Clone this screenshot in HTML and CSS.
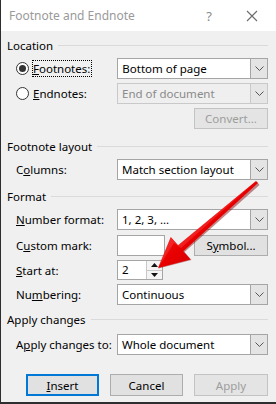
FILE: index.html
```html
<!DOCTYPE html>
<html>
<head>
<meta charset="utf-8">
<link rel="stylesheet" href="styles.css">
</head>
<body>
<div class="win">
  <div class="titlebar">
    <span class="title">Footnote and Endnote</span>
    <span class="help">?</span>
    <svg class="close" width="12" height="12" viewBox="0 0 12 12"><path d="M1 1 L11 11 M11 1 L1 11" stroke="#6b6b6b" stroke-width="1.1" fill="none"/></svg>
  </div>

  <div class="group g-location"><span>Location</span><i class="rule"></i></div>
  <div class="row r-first">
    <span class="radio checked"></span>
    <span class="rlabel focus"><u>F</u>ootnotes:</span>
    <div class="select"><span class="val">Bottom of page</span><span class="drop"><svg width="9" height="5" viewBox="0 0 9 5"><path d="M0.5 0.5 L4.5 4.5 L8.5 0.5" stroke="#555" fill="none"/></svg></span></div>
  </div>
  <div class="row r-gap4">
    <span class="radio"></span>
    <span class="rlabel"><u>E</u>ndnotes:</span>
    <div class="select disabled"><span class="val">End of document</span><span class="drop"><svg width="9" height="5" viewBox="0 0 9 5"><path d="M0.5 0.5 L4.5 4.5 L8.5 0.5" stroke="#555" fill="none"/></svg></span></div>
  </div>
  <div class="row r-gap4 r-right">
    <span class="btn disabled">Convert...</span>
  </div>

  <div class="group g-layout"><span>Footnote layout</span><i class="rule"></i></div>
  <div class="row r-gap5">
    <span class="label">C<u>o</u>lumns:</span>
    <div class="select"><span class="val">Match section layout</span><span class="drop"><svg width="9" height="5" viewBox="0 0 9 5"><path d="M0.5 0.5 L4.5 4.5 L8.5 0.5" stroke="#555" fill="none"/></svg></span></div>
  </div>

  <div class="group g-format"><span>Format</span><i class="rule"></i></div>
  <div class="row r-gap5">
    <span class="label"><u>N</u>umber format:</span>
    <div class="select"><span class="val">1, 2, 3, ...</span><span class="drop"><svg width="9" height="5" viewBox="0 0 9 5"><path d="M0.5 0.5 L4.5 4.5 L8.5 0.5" stroke="#555" fill="none"/></svg></span></div>
  </div>
  <div class="row r-gap5">
    <span class="label">C<u>u</u>stom mark:</span>
    <span class="textbox"></span>
    <span class="btn symbol">S<u>y</u>mbol...</span>
  </div>
  <div class="row r-gap4 r-spin">
    <span class="label"><u>S</u>tart at:</span>
    <div class="spin">
      <span class="val">2</span>
      <span class="spinbtns">
        <span class="sb up"><svg width="7" height="4" viewBox="0 0 7 4"><path d="M0 4 L3.5 0 L7 4Z" fill="#111"/></svg></span>
        <span class="sb down"><svg width="7" height="4" viewBox="0 0 7 4"><path d="M0 0 L3.5 4 L7 0Z" fill="#111"/></svg></span>
      </span>
    </div>
  </div>
  <div class="row r-gap4">
    <span class="label">Nu<u>m</u>bering:</span>
    <div class="select"><span class="val">Continuous</span><span class="drop"><svg width="9" height="5" viewBox="0 0 9 5"><path d="M0.5 0.5 L4.5 4.5 L8.5 0.5" stroke="#555" fill="none"/></svg></span></div>
  </div>

  <div class="group g-apply"><span>Apply changes</span><i class="rule"></i></div>
  <div class="row r-gap7">
    <span class="label">A<u>p</u>ply changes to:</span>
    <div class="select"><span class="val">Whole document</span><span class="drop"><svg width="9" height="5" viewBox="0 0 9 5"><path d="M0.5 0.5 L4.5 4.5 L8.5 0.5" stroke="#555" fill="none"/></svg></span></div>
  </div>

  <div class="buttons">
    <span class="btn default"><u>I</u>nsert</span>
    <span class="btn">Cancel</span>
    <span class="btn disabled">Apply</span>
  </div>

  <svg class="arrow" width="276" height="404" viewBox="0 0 276 404">
    <defs>
      <linearGradient id="rg" x1="0" y1="0" x2="1" y2="1">
        <stop offset="0" stop-color="#ff3030"/>
        <stop offset="0.5" stop-color="#e80000"/>
        <stop offset="1" stop-color="#b00000"/>
      </linearGradient>
    </defs>
    <polygon points="257.5,182.5 180,248 172,239 158.5,268.5 191.5,260 184.5,252 259.5,185" fill="#7a0000" opacity="0.45"/>
    <polygon points="256,180.9 178.1,245.3 170.8,237 158,268 190.6,259.6 183.3,251.3 258,183.1" fill="url(#rg)"/>
    <polygon points="256,180.9 178.1,245.3 170.8,237 158,268 174,243 181,248" fill="#ff5a5a" opacity="0.35"/>
  </svg>
</div>
</body>
</html>
```

FILE: styles.css
```css
html, body {
  margin: 0;
  padding: 0;
  background: #f0f0f0;
}

.win {
  position: relative;
  width: 275px;
  height: 402px;
  border-left: 1px solid #2e2e2e;
  border-bottom: 2px solid #2e2e2e;
  background: #f0f0f0;
  font-family: "Noto Sans", "Open Sans", sans-serif;
  font-size: 11.5px;
  color: #000;
  overflow: hidden;
}

.titlebar {
  height: 31px;
  background: #fff;
  display: flex;
  align-items: center;
}

.title {
  flex: 1;
  padding-left: 8px;
  color: #9a9a9a;
  font-size: 12px;
}

.help {
  color: #8a8a8a;
  font-size: 13px;
  margin-right: 34px;
}

.close {
  margin-right: 18px;
}

.group {
  display: flex;
  align-items: center;
  height: 16px;
  padding-left: 6px;
}

.group .rule {
  flex: 1;
  height: 1px;
  background: #dadada;
  margin-left: 5px;
  margin-right: 8px;
}

.g-location { margin-top: 6px; }
.g-layout { margin-top: 9px; }
.g-format { margin-top: 8px; }
.g-apply { margin-top: 6px; }

.row {
  display: flex;
  align-items: center;
  height: 21px;
  padding-left: 15px;
}

.r-first { margin-top: 5px; }
.r-gap4 { margin-top: 4px; }
.r-gap5 { margin-top: 5px; }
.r-gap7 { margin-top: 7px; }
.r-right { padding-left: 193px; }
.r-spin { height: 20px; }

.label {
  width: 101px;
  flex: none;
}

.radio {
  width: 13px;
  height: 13px;
  box-sizing: border-box;
  border: 1px solid #333;
  border-radius: 50%;
  background: #fff;
  flex: none;
  display: flex;
  align-items: center;
  justify-content: center;
}

.radio.checked::after {
  content: "";
  width: 7px;
  height: 7px;
  border-radius: 50%;
  background: #333;
}

.rlabel {
  width: 84px;
  margin-left: 4px;
  flex: none;
  box-sizing: border-box;
}

.rlabel.focus {
  width: auto;
  margin-right: 26px;
  outline: 1px dotted #000;
  outline-offset: 0;
  padding: 0 1px 0 0;
  line-height: 15px;
}

.select {
  width: 151px;
  height: 21px;
  box-sizing: border-box;
  border: 1px solid #a5a5a5;
  background: #fff;
  display: flex;
  flex: none;
}

.select .val {
  flex: 1;
  padding-left: 4px;
  line-height: 19px;
  white-space: nowrap;
}

.select .drop {
  width: 16px;
  border-left: 1px solid #a5a5a5;
  background: #e4e4e4;
  display: flex;
  align-items: center;
  justify-content: center;
}

.select.disabled {
  background: #efefef;
  border-color: #c9c9c9;
  color: #8a8a8a;
}

.select.disabled .drop {
  border-left-color: #c9c9c9;
  background: #e6e6e6;
}

.btn {
  box-sizing: border-box;
  width: 74px;
  height: 21px;
  border: 1px solid #adadad;
  background: #e1e1e1;
  display: flex;
  align-items: center;
  justify-content: center;
  flex: none;
}

.btn.disabled {
  color: #9d9d9d;
  border-color: #c3c3c3;
  background: #e4e4e4;
}

.textbox {
  width: 48px;
  height: 21px;
  box-sizing: border-box;
  border: 1px solid #a5a5a5;
  background: #fff;
  flex: none;
}

.btn.symbol {
  margin-left: 29px;
}

.spin {
  width: 46px;
  height: 20px;
  box-sizing: border-box;
  border: 1px solid #a5a5a5;
  background: #fff;
  display: flex;
  flex: none;
}

.spin .val {
  flex: 1;
  padding-left: 4px;
  line-height: 18px;
}

.spinbtns {
  width: 15px;
  display: flex;
  flex-direction: column;
  border-left: 1px solid #c8c8c8;
}

.sb {
  flex: 1;
  display: flex;
  align-items: center;
  justify-content: center;
  background: #f4f4f4;
}

.sb.up {
  border-bottom: 1px solid #c8c8c8;
}

.buttons {
  display: flex;
  gap: 11px;
  padding-left: 25px;
  margin-top: 19px;
}

.buttons .btn {
  height: 22px;
  width: 73px;
}

.buttons .btn:last-child {
  width: 74px;
}

.btn.default {
  border: 2px solid #0078d7;
}

.arrow {
  position: absolute;
  left: -1px;
  top: 0;
  pointer-events: none;
}

u {
  text-decoration: underline;
  text-underline-offset: 1px;
}
```
